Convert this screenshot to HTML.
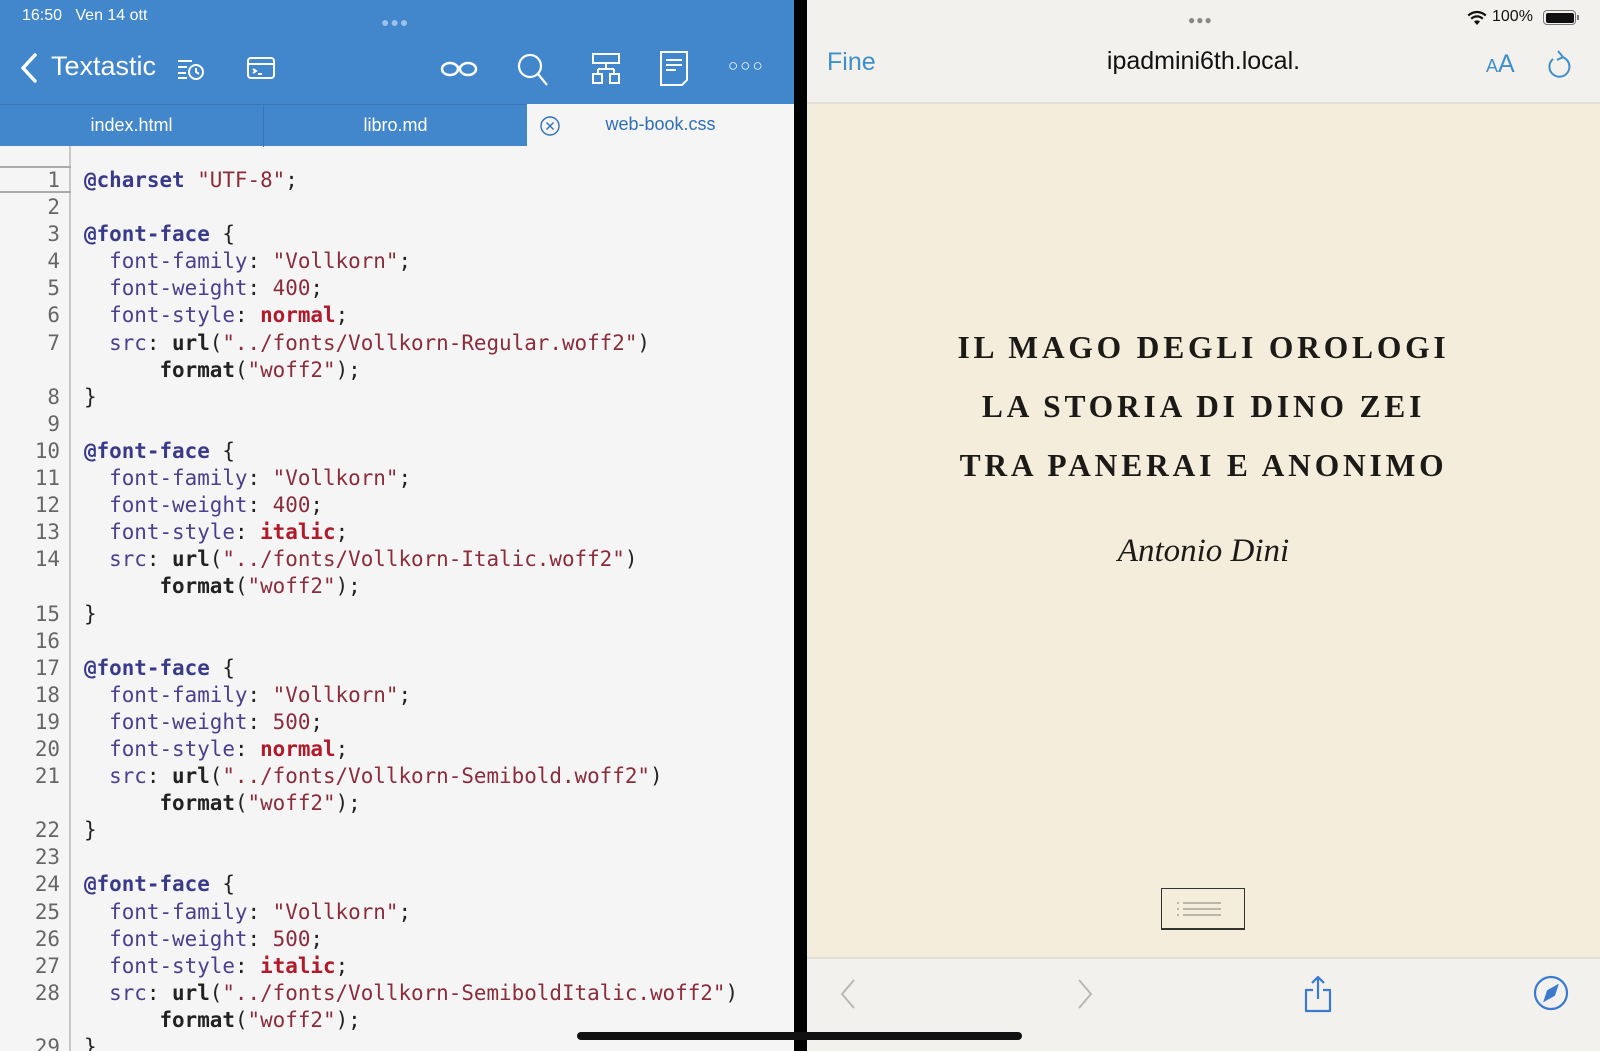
<!DOCTYPE html>
<html><head><meta charset="utf-8"><style>
*{margin:0;padding:0;box-sizing:border-box}
body{width:1600px;height:1051px;overflow:hidden;position:relative;background:#000;font-family:"Liberation Sans",sans-serif}
.abs{position:absolute}
#left{left:0;top:0;width:794px;height:1051px;background:#f5f5f5;overflow:hidden}
#top{left:0;top:0;width:794px;height:104px;background:#4286cc}
#tabs{left:0;top:104px;width:794px;height:42px;background:#4286cc;border-top:1px solid #3a76b8}
.tab{position:absolute;top:0;height:42px;line-height:40px;text-align:center;color:#fff;font-size:18px}
#gut{left:0;top:146px;width:71px;height:905px;border-right:2px solid #c8c8c8;background:#f5f5f5}
pre{font-family:"DejaVu Sans Mono","Liberation Mono",monospace;font-size:20.9px;line-height:27.1px;position:absolute;top:167px;color:#222}
#nums{left:0;width:60px;text-align:right;color:#666;font-family:"DejaVu Sans Mono",monospace}
#code{left:84px}
.k{color:#3a3a8a;font-weight:bold}
.p{color:#4a3f8e}
.s{color:#8a2c3b}
.r{color:#b01a2a;font-weight:bold}
.f{font-weight:bold;color:#222}
#right{left:807px;top:0;width:793px;height:1051px;background:#f2f1ee}
#page{left:807px;top:102px;width:793px;height:857px;background:#f4eddc;border-top:2px solid #e2dfd8;border-bottom:2px solid #e2dfd8}
.t{position:absolute;left:807px;width:793px;text-align:center;font-family:"Liberation Serif",serif;font-weight:bold;font-size:31.5px;letter-spacing:3.8px;color:#1c1a17}
</style></head><body>
<div id="left" class="abs">
 <div id="top" class="abs"></div>
 <div class="abs" style="left:22px;top:7px;color:#fff;font-size:16px">16:50&nbsp;&nbsp; Ven 14 ott</div>
 <div class="abs" style="left:381px;top:14px;color:#9cc0ea;font-size:14px;letter-spacing:1px">●●●</div>
 <svg class="abs" style="left:18px;top:52px" width="22" height="32"><path d="M17 3 L5 16 L17 29" stroke="#fff" stroke-width="3.5" fill="none" stroke-linecap="round" stroke-linejoin="round"/></svg>
 <div class="abs" style="left:51px;top:51px;color:#fff;font-size:27px">Textastic</div>
 <svg class="abs" style="left:176px;top:56px" width="30" height="26" fill="none" stroke="#fff" stroke-width="2"><path d="M2 5h14M2 11h9M2 17h8M2 22h9"/><circle cx="20" cy="16" r="7"/><path d="M20 12v4l3 2"/></svg>
 <svg class="abs" style="left:246px;top:55px" width="30" height="26" fill="none" stroke="#fff" stroke-width="2"><rect x="2" y="3" width="26" height="20" rx="3"/><path d="M2 9h26M7 14l3 2-3 2M12 19h4"/></svg>
 <svg class="abs" style="left:440px;top:58px" width="38" height="22" fill="none" stroke="#fff" stroke-width="2.5"><ellipse cx="10" cy="11" rx="8" ry="6"/><ellipse cx="28" cy="11" rx="8" ry="6"/><path d="M17 9h4"/></svg>
 <svg class="abs" style="left:516px;top:52px" width="34" height="36" fill="none" stroke="#fff" stroke-width="2.2"><circle cx="14" cy="14" r="11"/><path d="M22 22l9 11"/></svg>
 <svg class="abs" style="left:590px;top:52px" width="32" height="34" fill="none" stroke="#fff" stroke-width="2"><rect x="3" y="2" width="26" height="9"/><path d="M16 11v6M8 17h16M8 17v5M24 17v5"/><rect x="3" y="22" width="9" height="9"/><rect x="20" y="22" width="9" height="9"/></svg>
 <svg class="abs" style="left:658px;top:50px" width="32" height="38" fill="none" stroke="#fff" stroke-width="2"><path d="M3 2h26v28l-5 5H3z"/><path d="M8 10h16M8 15h16M8 20h10"/></svg>
 <div class="abs" style="left:728px;top:56px;color:#fff;font-size:17px;letter-spacing:2px">○○○</div>
 <div id="tabs" class="abs">
  <div class="tab" style="left:0;width:264px;border-right:1px solid #3a76b8">index.html</div>
  <div class="tab" style="left:264px;width:263px">libro.md</div>
  <div class="tab" style="left:527px;width:267px;background:#f5f5f5;color:#2f6fb5;top:-1px;height:43px">web-book.css</div>
  <svg class="abs" style="left:539px;top:10px" width="22" height="22" fill="none" stroke="#2f6fb5" stroke-width="1.4"><circle cx="11" cy="11" r="9"/><path d="M7.5 7.5l7 7M14.5 7.5l-7 7"/></svg>
 </div>
 <div id="gut" class="abs"></div>
 <div class="abs" style="left:0;top:166px;width:71px;height:27px;border-top:2px solid #aaa;border-bottom:2px solid #aaa"></div>
<pre id="nums">1
2
3
4
5
6
7

8
9
10
11
12
13
14

15
16
17
18
19
20
21

22
23
24
25
26
27
28

29</pre>
<pre id="code"><span class="k">@charset</span> <span class="s">"UTF-8"</span>;

<span class="k">@font-face</span> {
  <span class="p">font-family</span>: <span class="s">"Vollkorn"</span>;
  <span class="p">font-weight</span>: <span class="s">400</span>;
  <span class="p">font-style</span>: <span class="r">normal</span>;
  <span class="p">src</span>: <span class="f">url</span>(<span class="s">"../fonts/Vollkorn-Regular.woff2"</span>)
      <span class="f">format</span>(<span class="s">"woff2"</span>);
}

<span class="k">@font-face</span> {
  <span class="p">font-family</span>: <span class="s">"Vollkorn"</span>;
  <span class="p">font-weight</span>: <span class="s">400</span>;
  <span class="p">font-style</span>: <span class="r">italic</span>;
  <span class="p">src</span>: <span class="f">url</span>(<span class="s">"../fonts/Vollkorn-Italic.woff2"</span>)
      <span class="f">format</span>(<span class="s">"woff2"</span>);
}

<span class="k">@font-face</span> {
  <span class="p">font-family</span>: <span class="s">"Vollkorn"</span>;
  <span class="p">font-weight</span>: <span class="s">500</span>;
  <span class="p">font-style</span>: <span class="r">normal</span>;
  <span class="p">src</span>: <span class="f">url</span>(<span class="s">"../fonts/Vollkorn-Semibold.woff2"</span>)
      <span class="f">format</span>(<span class="s">"woff2"</span>);
}

<span class="k">@font-face</span> {
  <span class="p">font-family</span>: <span class="s">"Vollkorn"</span>;
  <span class="p">font-weight</span>: <span class="s">500</span>;
  <span class="p">font-style</span>: <span class="r">italic</span>;
  <span class="p">src</span>: <span class="f">url</span>(<span class="s">"../fonts/Vollkorn-SemiboldItalic.woff2"</span>)
      <span class="f">format</span>(<span class="s">"woff2"</span>);
}</pre>
</div>
<div class="abs" style="left:797px;top:495px;width:6px;height:60px;background:#777;border-radius:3px"></div>
<div id="right" class="abs"></div>
<div id="page" class="abs"></div>
<div class="abs" style="left:1188px;top:13px;color:#888;font-size:12px;letter-spacing:1px">●●●</div>
<svg class="abs" style="left:1467px;top:10px" width="20" height="16"><path d="M10 15l-3-3.5a4.5 4.5 0 0 1 6 0z M3.5 8a9 9 0 0 1 13 0l-1.5 1.6a7 7 0 0 0-10 0z M0.5 4.8a13.5 13.5 0 0 1 19 0l-1.5 1.6a11.5 11.5 0 0 0-16 0z" fill="#111"/></svg>
<div class="abs" style="left:1492px;top:8px;font-size:16px;color:#111">100%</div>
<div class="abs" style="left:1543px;top:10px;width:33px;height:15px;border:1.5px solid #777;border-radius:4px;padding:1.5px"><div style="width:100%;height:100%;background:#111;border-radius:2px"></div></div>
<div class="abs" style="left:1577px;top:15px;width:2px;height:5px;background:#777"></div>
<div class="abs" style="left:827px;top:48px;font-size:25px;color:#3f8fc9">Fine</div>
<div class="abs" style="left:807px;width:793px;top:47px;text-align:center;font-size:25px;color:#111">ipadmini6th.local.</div>
<div class="abs" style="left:1486px;top:50px;color:#3f8fc9"><span style="font-size:18px">A</span><span style="font-size:25px">A</span></div>
<svg class="abs" style="left:1546px;top:48px" width="26" height="32" fill="none" stroke="#3f8fc9" stroke-width="2"><path d="M16 9a10 10 0 1 1-9 2"/><path d="M12 3l5 6-6 3"/></svg>
<div class="t" style="top:330px">IL MAGO DEGLI OROLOGI</div>
<div class="t" style="top:389px">LA STORIA DI DINO ZEI</div>
<div class="t" style="top:448px">TRA PANERAI E ANONIMO</div>
<div class="abs" style="left:807px;width:793px;top:533px;text-align:center;font-family:'Liberation Serif',serif;font-style:italic;font-size:33px;color:#1c1a17">Antonio Dini</div>
<div class="abs" style="left:1161px;top:888px;width:84px;height:42px;border:1.5px solid #333;border-bottom-width:2px"></div>
<svg class="abs" style="left:1175px;top:900px" width="56" height="18" stroke="#aaa39a" stroke-width="1.5"><path d="M8 3h38M8 9h38M8 15h38M2 3h2M2 9h2M2 15h2"/></svg>
<svg class="abs" style="left:838px;top:978px" width="20" height="32" fill="none" stroke="#b8b8b8" stroke-width="2"><path d="M16 2L4 16l12 14"/></svg>
<svg class="abs" style="left:1075px;top:978px" width="20" height="32" fill="none" stroke="#b8b8b8" stroke-width="2"><path d="M4 2l12 14L4 30"/></svg>
<svg class="abs" style="left:1302px;top:975px" width="32" height="40" fill="none" stroke="#3a7bd0" stroke-width="2.2" stroke-linejoin="round"><path d="M16 2v22M10 8l6-6 6 6"/><path d="M11 15H4v21h24V15h-7"/></svg>
<svg class="abs" style="left:1533px;top:975px" width="36" height="36" fill="none" stroke="#3a7bd0" stroke-width="2.2"><circle cx="18" cy="18" r="16"/><path d="M24 11l-9 5-3 9 9-5z" fill="#3a7bd0"/></svg>
<div class="abs" style="left:794px;top:0;width:13px;height:1051px;background:#000"></div>
<div class="abs" style="left:577px;top:1032px;width:445px;height:8px;background:#111;border-radius:4px"></div>
</body></html>
